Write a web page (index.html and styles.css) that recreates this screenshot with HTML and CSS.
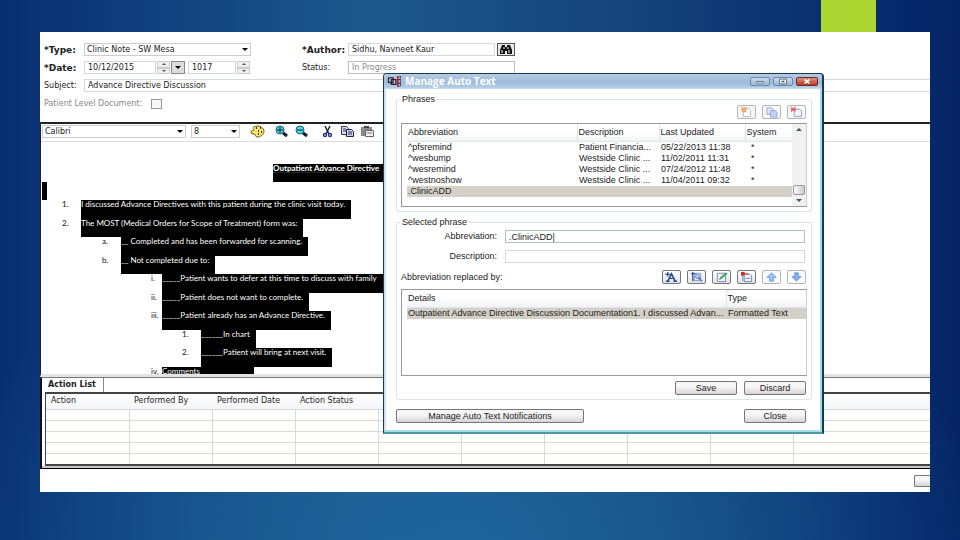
FILE: index.html
```
<!DOCTYPE html>
<html lang="en">
<head>
<meta charset="utf-8">
<title>Manage Auto Text</title>
<link rel="stylesheet" href="styles.css">
</head>
<body>
<div class="accent"></div>
<main class="page">
  <form class="note-form">
    <div class="form-row">
      <label class="form-label required" for="type">*Type:</label>
      <span class="combo combo-type"><select id="type"><option>Clinic Note - SW Mesa</option></select></span>
      <label class="form-label second required" for="author">*Author:</label>
      <input class="field author" id="author" value="Sidhu, Navneet Kaur">
      <button class="find" type="button" aria-label="Find author"><svg viewBox="0 0 14 11"><path d="M3 1h3v2h2V1h3l2 5v4H8V7H6v3H1V6z" fill="#111"/><path d="M3 6v3M5 3v2M10 6v3M9 3v2" stroke="#fff"/></svg></button>
    </div>
    <div class="form-row">
      <label class="form-label required" for="date">*Date:</label>
      <span class="date-group">
        <input class="field date" id="date" value="10/12/2015">
        <span class="spin"><button type="button" aria-label="Day up" class="up"></button><button type="button" aria-label="Day down" class="down"></button></span>
        <button class="drop" type="button" aria-label="Calendar"></button>
        <input class="field time" aria-label="Time" value="1017">
        <span class="spin"><button type="button" aria-label="Time up" class="up"></button><button type="button" aria-label="Time down" class="down"></button></span>
      </span>
      <label class="form-label second" for="status">Status:</label>
      <input class="field status" id="status" value="In Progress" disabled>
    </div>
    <div class="form-row">
      <label class="form-label" for="subject">Subject:</label>
      <input class="field subject" id="subject" value="Advance Directive Discussion">
    </div>
    <div class="form-row">
      <label class="muted" for="pld">Patient Level Document:</label>
      <input class="check" type="checkbox" id="pld" disabled>
    </div>
  </form>

  <section class="editor">
    <div class="toolbar">
      <span class="combo combo-font"><select aria-label="Font"><option>Calibri</option></select></span>
      <span class="combo combo-size"><select aria-label="Size"><option>8</option></select></span>
      <button class="tool palette" type="button" aria-label="Color"><svg viewBox="0 0 15 13"><path d="M4 2C7 0 13 1 14 6c0 4-4 6-7 6-2 0-1-3-3-3S1 9 1 7c0-2 3-1 3-2S2 3 4 2z" fill="#f7e36a" stroke="#6b5310"/><path d="M6 3h1M10 3h1M8 6h1M11 7h1M8 9h1" stroke="#443300" stroke-width="2"/></svg></button>
      <button class="tool" type="button" aria-label="Zoom in"><svg viewBox="0 0 15 13"><path d="M8 7l5 4" stroke="#123" stroke-width="3"/><circle cx="6" cy="5" r="4" fill="#5fd0d0" stroke="#087080"/><path d="M3 5h6M6 2v6" stroke="#024" stroke-width="1"/></svg></button>
      <button class="tool" type="button" aria-label="Zoom out"><svg viewBox="0 0 15 13"><path d="M8 7l5 4" stroke="#123" stroke-width="3"/><circle cx="6" cy="5" r="4" fill="#5fd0d0" stroke="#087080"/><path d="M3 5h6" stroke="#036" stroke-width="1"/></svg></button>
      <button class="tool cut" type="button" aria-label="Cut"><svg viewBox="0 0 15 13"><path d="M5 1l4 8M10 1L6 9" stroke="#223" stroke-width="1.5"/><circle cx="5" cy="10" r="1.5" fill="none" stroke="#22339a" stroke-width="1.4"/><circle cx="10" cy="10" r="1.5" fill="none" stroke="#22339a" stroke-width="1.4"/></svg></button>
      <button class="tool" type="button" aria-label="Copy"><svg viewBox="0 0 15 13"><path d="M1.500 1.500h5l2 2v6h-7z" fill="#dde" stroke="#335"/><path d="M6.500 4.500h5l2 2v5h-7z" fill="#ccd4f4" stroke="#224"/><path d="M3 4h3M3 6h3M8 7h4M8 9h4" stroke="#335"/></svg></button>
      <button class="tool" type="button" aria-label="Paste"><svg viewBox="0 0 15 13"><path d="M1 2h11v9H1z" fill="#888"/><path d="M4 1h5v2H4z" fill="#444"/><path d="M5.500 5.500h8v6h-8z" fill="#eee" stroke="#666"/><path d="M7 8h5" stroke="#777"/></svg></button>
    </div>
    <div class="doc">
      <div class="doc-title"><span class="hl long">Outpatient Advance Directive</span></div>
      <div class="lines">
        <div class="line"><span class="caret"></span></div>
        <div class="line l1"><span class="num">1.</span><span class="hl">I discussed Advance Directives with this patient during the clinic visit today.</span></div>
        <div class="line l1"><span class="num">2.</span><span class="hl">The MOST (Medical Orders for Scope of Treatment) form was:</span></div>
        <div class="line l2"><span class="num">a.</span><span class="hl">__ Completed and has been forwarded for scanning.</span></div>
        <div class="line l2"><span class="num">b.</span><span class="hl">__ Not completed due to:</span></div>
        <div class="line l3"><span class="num">i.</span><span class="hl long">_____Patient wants to defer at this time to discuss with family</span></div>
        <div class="line l3"><span class="num">ii.</span><span class="hl">_____Patient does not want to complete.</span></div>
        <div class="line l3"><span class="num">iii.</span><span class="hl">_____Patient already has an Advance Directive.</span></div>
        <div class="line l4"><span class="num">1.</span><span class="hl">______In chart</span></div>
        <div class="line l4"><span class="num">2.</span><span class="hl">______Patient will bring at next visit.</span></div>
        <div class="line l3"><span class="num">iv.</span><span class="hl">Comments_____________</span></div>
      </div>
    </div>
  </section>

  <section class="actions">
    <h2 class="tab">Action List</h2>
    <div class="table-frame">
      <table>
        <thead><tr><th>Action</th><th>Performed By</th><th>Performed Date</th><th>Action Status</th><th></th><th></th><th></th><th></th><th></th><th class="rest"></th></tr></thead>
        <tbody>
          <tr><td></td><td></td><td></td><td></td><td></td><td></td><td></td><td></td><td></td><td></td></tr>
          <tr><td></td><td></td><td></td><td></td><td></td><td></td><td></td><td></td><td></td><td></td></tr>
          <tr><td></td><td></td><td></td><td></td><td></td><td></td><td></td><td></td><td></td><td></td></tr>
          <tr><td></td><td></td><td></td><td></td><td></td><td></td><td></td><td></td><td></td><td></td></tr>
          <tr><td></td><td></td><td></td><td></td><td></td><td></td><td></td><td></td><td></td><td></td></tr>
        </tbody>
      </table>
    </div>
  </section>
  <footer class="foot"><button class="btn stub" type="button" aria-label="Sign"></button></footer>

  <section class="dialog" role="dialog" aria-labelledby="dlg-title">
    <header class="titlebar">
      <svg class="app-icon" viewBox="0 0 15 12"><path d="M1 2h5v5H1zM4 4h5v5H4z" fill="#dde" stroke="#223" stroke-width="1.400"/><path d="M13 1h-2v10h2M11 4h3M11 8h3" fill="none" stroke="#a12" stroke-width="1.400"/><path d="M14 0v12" stroke="#223" stroke-dasharray="2 1"/></svg>
      <h1 id="dlg-title">Manage Auto Text</h1>
      <button class="win" type="button" aria-label="Minimize"><svg viewBox="0 0 20 9"><path d="M5.500 4.500h9v2h-9z" fill="#fff" stroke="#567"/></svg></button>
      <button class="win max" type="button" aria-label="Maximize"><svg viewBox="0 0 20 9"><path d="M5.500 1.500h9v6h-9z" fill="#fff" stroke="#456"/><path d="M8 3.500h4v2H8z" fill="#456"/></svg></button>
      <button class="win close" type="button" aria-label="Close window"><svg viewBox="0 0 20 9"><path d="M7 2l6 5M13 2L7 7" stroke="#fff" stroke-width="2.200"/></svg></button>
    </header>
    <div class="dialog-body">
      <fieldset class="group">
        <legend>Phrases</legend>
        <div class="icon-row top-icons">
          <button class="icon-btn off" type="button" aria-label="New phrase"><svg viewBox="0 0 18 13"><path d="M5.500 2.500h6l2 2v7h-8z" fill="#fff" stroke="#aab4cc"/><path d="M3 2h5v4H4M3 4h6" stroke="#f0a860" fill="none" stroke-width="1.500"/></svg></button>
          <button class="icon-btn off" type="button" aria-label="Duplicate phrase"><svg viewBox="0 0 18 13"><path d="M4 2h5l2 2v5H4z" fill="#dfe7fb" stroke="#8fa4dc"/><path d="M8 5h5l2 2v5H8z" fill="#c4d2f6" stroke="#8fa4dc"/></svg></button>
          <button class="icon-btn off" type="button" aria-label="Delete phrase"><svg viewBox="0 0 18 13"><path d="M6.500 3.500h6l2 2v6h-8z" fill="#eef3fd" stroke="#8c9fd0"/><path d="M3 1l5 5M8 1L3 6M2 3.500h7" stroke="#e06a62" stroke-width="1.300"/></svg></button>
        </div>
        <div class="listbox phrases">
          <table>
            <thead><tr><th class="c-abbr">Abbreviation</th><th class="c-desc">Description</th><th class="c-upd">Last Updated</th><th>System</th></tr></thead>
            <tbody>
              <tr><td>^pfsremind</td><td>Patient Financia...</td><td>05/22/2013 11:38</td><td class="star">*</td></tr>
              <tr><td>^wesbump</td><td>Westside Clinic ...</td><td>11/02/2011 11:31</td><td class="star">*</td></tr>
              <tr><td>^wesremind</td><td>Westside Clinic ...</td><td>07/24/2012 11:48</td><td class="star">*</td></tr>
              <tr><td>^westnoshow</td><td>Westside Clinic ...</td><td>11/04/2011 09:32</td><td class="star">*</td></tr>
              <tr class="selected"><td>.ClinicADD</td><td></td><td></td><td></td></tr>
            </tbody>
          </table>
          <div class="scroll"><button type="button" class="up" aria-label="Scroll up"></button><span class="thumb"></span><button type="button" class="down" aria-label="Scroll down"></button></div>
        </div>
      </fieldset>

      <fieldset class="group">
        <legend>Selected phrase</legend>
        <div class="pair"><label for="abbr">Abbreviation:</label><input id="abbr" class="field active" value=".ClinicADD|"></div>
        <div class="pair"><label for="desc">Description:</label><input id="desc" class="field"></div>
        <div class="replace-row">
          <span>Abbreviation replaced by:</span>
          <div class="icon-row">
            <button class="icon-btn" type="button" aria-label="Add text"><svg viewBox="0 0 18 13"><path d="M5 11l4-8 4 8M6.500 8h5M3 11h4M11 11h4" fill="none" stroke="#2a4a90" stroke-width="1.600"/><path d="M2 3.500h6M5 1v5" stroke="#1c3a98" stroke-width="1.300"/></svg></button>
            <button class="icon-btn" type="button" aria-label="Add template"><svg viewBox="0 0 18 13"><path d="M6.500 2.500h7v8h-7z" fill="#dbe8fa" stroke="#7d96c8"/><path d="M3 3h5M5 1v10" stroke="#23418c" stroke-width="1.300"/><circle cx="10" cy="6" r="2" fill="none" stroke="#456ab5"/><path d="M11 7l4 4" stroke="#456ab5" stroke-width="1.500"/></svg></button>
            <button class="icon-btn" type="button" aria-label="Edit"><svg viewBox="0 0 18 13"><path d="M4.500 2.500h9v9h-9z" fill="#eef5ff" stroke="#7488a8"/><path d="M7 9l1-2 6-5 1 1-6 5z" fill="#4cc860" stroke="#2a9a44" stroke-width="1"/></svg></button>
            <button class="icon-btn" type="button" aria-label="Remove"><svg viewBox="0 0 18 13"><path d="M6.500 3.500h6l2 2v6h-8z" fill="#eef3fd" stroke="#6c84c0"/><path d="M3 1h4v4H3z" fill="#d8281c"/><path d="M7 3h4" stroke="#d8281c"/><path d="M5 5v6M8 8h5" stroke="#6c84c0"/></svg></button>
            <button class="icon-btn off" type="button" aria-label="Move up"><svg viewBox="0 0 18 13"><path d="M9 2l5 5h-3v4H7V7H4z" fill="#9cc4f2" stroke="#6a9ad8"/></svg></button>
            <button class="icon-btn off" type="button" aria-label="Move down"><svg viewBox="0 0 18 13"><path d="M9 11l5-5h-3V2H7v4H4z" fill="#7fb0ea" stroke="#6a9ad8"/></svg></button>
          </div>
        </div>
        <div class="listbox details">
          <table>
            <thead><tr><th>Details</th><th class="c-type">Type</th></tr></thead>
            <tbody><tr class="selected"><td>Outpatient Advance Directive Discussion Documentation1. I discussed Advan...</td><td>Formatted Text</td></tr></tbody>
          </table>
        </div>
        <div class="btn-row end"><button class="btn" type="button">Save</button><button class="btn" type="button">Discard</button></div>
      </fieldset>
      <div class="btn-row bottom"><button class="btn wide" type="button">Manage Auto Text Notifications</button><button class="btn" type="button">Close</button></div>
    </div>
  </section>
</main>
</body>
</html>
```
FILE: styles.css
```
* { box-sizing: border-box; }

body {
  margin: 0;
  height: 100vh;
  display: flex;
  padding: 32px 30px 48px 40px;
  position: relative;
  background:
    radial-gradient(ellipse 55% 60% at 48% 100%, #1d649a 0%, rgba(29, 100, 154, 0) 100%),
    linear-gradient(90deg, #082e72 0%, #1c588c 38%, #17467c 62%, #062a6c 92%, #062566 100%);
  font: 8px/12px "DejaVu Sans", sans-serif;
  color: #222;
}

button, input, select { font: inherit; color: inherit; margin: 0; padding: 0; }
h1, h2 { margin: 0; font: inherit; }
svg { display: block; }

.accent {
  position: absolute;
  top: 0;
  right: 84px;
  width: 55px;
  height: 32px;
  background: #acd632;
}

.page {
  position: relative;
  flex: 1;
  min-width: 0;
  display: flex;
  flex-direction: column;
  background: #fff;
}

/* Note header */
.note-form {
  display: flex;
  flex-direction: column;
  gap: 5px;
  padding: 11px 0 12px 4px;
}
.form-row { display: flex; align-items: center; height: 13px; }
.form-label { width: 40px; white-space: nowrap; }
.required { font-size: 9px; font-weight: bold; }
.second { width: 46px; margin-left: 51px; }
.muted { width: 107px; color: #888; white-space: nowrap; }

.field {
  height: 13px;
  min-width: 0;
  border: 1px solid #d5d9dc;
  border-radius: 0;
  padding: 0 3px;
  background: #fff;
}
.author { width: 147px; }
.status { width: 167px; color: #888; border-color: #bbb; }
.subject { flex: 1; border-right: 0; }
.date-group { display: flex; width: 167px; height: 13px; }
.date { width: 72px; }
.time { width: 48px; margin-left: 3px; }

.find {
  width: 18px;
  height: 13px;
  margin-left: 2px;
  border: 1px solid #555;
  background: #e8e8e8;
}
.find svg { width: 14px; height: 11px; margin: auto; }

.check {
  appearance: none;
  width: 11px;
  height: 10px;
  border: 1px solid #999;
  background: #f7f7f7;
}

.combo { position: relative; display: flex; height: 13px; }
.combo select {
  appearance: none;
  width: 100%;
  border: 1px solid #ccc;
  border-radius: 0;
  padding: 0 2px;
  background: #fff;
}
.combo::after {
  content: "";
  position: absolute;
  right: 3px;
  top: 5px;
  border: 3px solid transparent;
  border-top-color: #000;
  border-bottom: 0;
}
.combo-type { width: 167px; }
.combo-font { width: 144px; }
.combo-size { width: 49px; }

.spin { display: flex; flex-direction: column; width: 13px; margin-left: 1px; }
.spin button {
  flex: 1;
  display: flex;
  align-items: center;
  justify-content: center;
  border: 1px solid #ccc;
  background: #eee;
}
.up::before, .down::before, .drop::before {
  content: "";
  border: 3px solid transparent;
}
.up::before { border-bottom-color: #456; border-top: 0; }
.down::before { border-top-color: #456; border-bottom: 0; }
.drop::before { border-top-color: #000; border-bottom: 0; }
.spin .up::before { border-width: 0 2px 2px; }
.spin .down::before { border-width: 2px 2px 0; }
.drop {
  display: flex;
  align-items: center;
  justify-content: center;
  width: 14px;
  margin-left: 1px;
  border: 1px solid #888;
  background: #ddd;
}

/* Editor */
.editor {
  flex: 1;
  min-height: 0;
  display: flex;
  flex-direction: column;
  border-top: 2px solid #222;
  border-left: 1px solid #222;
  border-bottom: 3px solid #e4e4e4;
}
.toolbar {
  display: flex;
  align-items: center;
  gap: 5px;
  height: 18px;
  padding: 0 0 2px 1px;
  border-bottom: 1px solid #ddd;
}
.tool { border: 0; background: none; width: 15px; height: 13px; }
.tool svg { width: 15px; height: 13px; }
.palette { margin: 0 4px 0 5px; }
.cut { margin-left: 6px; }

.doc {
  flex: 1;
  min-height: 0;
  overflow: hidden;
  font: 8px/9px Lato, sans-serif;
  padding-top: 22px;
  white-space: nowrap;
}
.doc-title {
  display: flex;
  height: 18px;
  padding-left: 232px;
  font-weight: bold;
  text-decoration: underline;
}
.lines {
  display: grid;
  grid-template-rows: repeat(11, 1fr);
  height: 203px;
}
.line { display: flex; min-height: 0; }
.hl { background: #000; color: #fff; padding-right: 6px; }
.long { padding-right: 24px; }
.caret { width: 5px; margin-left: 1px; background: #000; }
.num { color: #111; }
.l1 .num { width: 19px; margin-left: 21px; }
.l2 .num { width: 19px; margin-left: 61px; }
.l3 .num { width: 11px; margin-left: 110px; }
.l4 .num { width: 19px; margin-left: 141px; }

/* Action list */
.actions {
  border-top: 1px solid #777;
  border-left: 2px solid #111;
  border-bottom: 1px solid #000;
  padding-left: 1px;
  padding-bottom: 2px;
  background: linear-gradient(#c8c8c8, #c8c8c8) bottom / 100% 2px no-repeat;
}
.tab {
  width: 61px;
  height: 14px;
  padding-left: 5px;
  border-right: 1px solid #888;
  font-weight: bold;
  line-height: 14px;
  white-space: nowrap;
}
.table-frame {
  margin-left: 2px;
  border: solid #444;
  border-width: 2px 0 2px 1px;
}
table { border-collapse: collapse; width: 100%; table-layout: fixed; }
th, td { padding: 0; text-align: left; font-weight: normal; white-space: nowrap; }
.actions table { background: #fefefc; }
.actions th {
  width: 83px;
  height: 15px;
  padding-left: 5px;
  background: linear-gradient(#fff, #f4f5f8);
}
.actions .rest { width: auto; }
.actions td { height: 11px; border: 1px solid #d6dad8; border-left: 0; }
.actions tbody tr:last-child td { border-bottom: 0; }
.actions td:last-child { border-right: 0; }

.foot { display: flex; justify-content: flex-end; height: 23px; padding-top: 6px; }
.foot .stub { width: 16px; height: 12px; border-right: 0; border-radius: 2px 0 0 2px; }

/* Dialog */
.dialog {
  position: absolute;
  left: 343px;
  top: 41px;
  width: 441px;
  background: #fff;
  border: solid #123c50;
  border-width: 1px 2px 2px 1px;
  border-bottom-color: #4f98a4;
  border-radius: 4px 4px 0 0;
  box-shadow: inset -2px -2px #a5dce6, inset 2px 0 #cfe0f0;
  font: 9px/11px "Liberation Sans", sans-serif;
}
.titlebar {
  display: flex;
  align-items: center;
  height: 15px;
  padding: 0 4px 0 3px;
  border-radius: 3px 3px 0 0;
  background: linear-gradient(#b9cbe0, #9dbbdb 60%, #b7cfe8);
  border-bottom: 1px solid #c8daea;
}
.app-icon { width: 15px; height: 11px; margin-right: 3px; }
.titlebar h1 {
  flex: 1;
  color: #fff;
  font: bold 10px/12px "Open Sans", sans-serif;
}
.win {
  width: 20px;
  height: 9px;
  margin-left: 3px;
  border: 1px solid #6c86a5;
  border-radius: 2px;
  background: linear-gradient(#cbdcee, #9ab7d6);
}
.win svg { width: 100%; height: 100%; }
.win.close { background: linear-gradient(#dc9284, #b93824); border-color: #6b2a28; width: 22px; }

.dialog-body { padding: 5px 10px 9px 12px; }
.group {
  min-width: 0;
  margin: 0 0 5px;
  padding: 0 4px 4px;
  border: 1px solid #dce5ea;
  border-radius: 2px;
}
.group legend { padding: 0 2px; margin-left: -1px; }
.icon-row { display: flex; gap: 6px; padding-right: 1px; }
.top-icons { justify-content: flex-end; padding-bottom: 4px; }
.icon-btn {
  width: 19px;
  height: 14px;
  border: 1px solid #777;
  border-radius: 2px;
  background: linear-gradient(#fff, #e0e4ea);
}
.icon-btn svg { width: 100%; height: 100%; }
.icon-btn.off { border-color: #b4b4b4; background: #fafafa; }

.listbox {
  display: flex;
  align-items: flex-start;
  border: 1px solid #999;
  border-right-color: #ccc;
  padding-left: 5px;
}
.phrases { height: 84px; }
.details { height: 87px; }
.listbox th {
  height: 17px;
  padding-left: 1px;
  border-bottom: 1px solid #e2e5ea;
  background: linear-gradient(#fff 40%, #f2f3f6);
}
.listbox th + th { border-left: 1px solid #e0e3e8; }
.listbox td { height: 11px; line-height: 11px; padding-left: 1px; overflow: hidden; }
.listbox td + td { padding-left: 2px; }
.c-abbr { width: 170px; }
.c-desc { width: 82px; }
.c-upd { width: 86px; }
.c-type { width: 80px; }
.listbox .star { padding-left: 6px; }
.selected td { background: #d5d0c7; }
.scroll {
  align-self: stretch;
  flex: 0 0 14px;
  display: flex;
  flex-direction: column;
  background: #f1f1f1;
}
.scroll button {
  display: flex;
  align-items: center;
  justify-content: center;
  height: 11px;
  border: 0;
  background: none;
}
.thumb {
  height: 10px;
  margin: auto 1px 0;
  border: 1px solid #999;
  border-radius: 2px;
  background: linear-gradient(90deg, #fafafa, #ccc);
}

.pair { display: flex; justify-content: flex-end; gap: 8px; margin: 2px 2px 7px 0; }
.pair label { flex: 1; text-align: right; line-height: 13px; }
.pair .field { width: 300px; }
.pair .active { border-color: #a9c2cc; }
.replace-row {
  display: flex;
  align-items: center;
  justify-content: space-between;
  padding-bottom: 5px;
}
.btn-row { display: flex; justify-content: flex-end; gap: 7px; }
.end { padding-top: 5px; padding-right: 1px; }
.bottom { justify-content: space-between; padding: 4px 6px 0 0; }
.btn {
  width: 62px;
  height: 14px;
  border: 1px solid #777;
  border-radius: 2px;
  background: linear-gradient(#f6f6f6 40%, #d4d4d4);
  line-height: 11px;
}
.wide { width: 188px; }
```
